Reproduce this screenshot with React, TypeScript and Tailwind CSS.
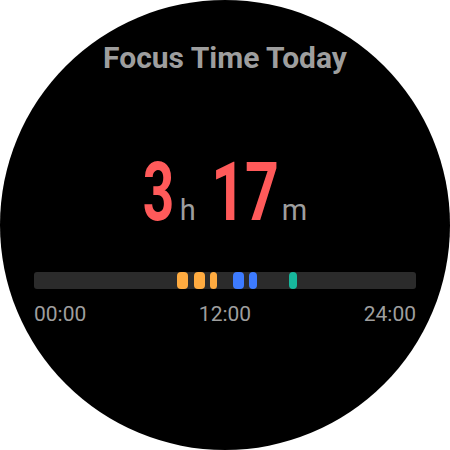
import React from "react";

const segments = [
  { left: 142.7, width: 11.3, color: "#ffab40" },
  { left: 160, width: 10.7, color: "#ffab40" },
  { left: 176, width: 7.3, color: "#ffab40" },
  { left: 198.7, width: 11.3, color: "#3d7bff" },
  { left: 215.3, width: 8, color: "#3d7bff" },
  { left: 254.7, width: 8, color: "#17b79c" },
];

export default function App() {
  return (
    <div className="w-[450px] h-[450px] bg-white" style={{ fontFamily: "Roboto, 'Noto Sans', sans-serif" }}>
      <div className="w-[450px] h-[450px] rounded-full bg-black flex flex-col items-center">
        <div className="mt-[40px] text-[30px] leading-[36px] font-bold text-[#9e9e9e]">Focus Time Today</div>
        <div className="mt-[75px] flex items-baseline leading-none">
          <span className="w-[31px] flex justify-center text-[82px] font-bold text-[#ff5a5a]">
            <span className="inline-block scale-x-[0.67]">3</span>
          </span>
          <span className="ml-[6px] text-[29px] text-[#9e9e9e]">h</span>
          <span className="ml-[16px] w-[66px] flex justify-center text-[82px] font-bold text-[#ff5a5a]">
            <span className="inline-block scale-x-[0.72]">17</span>
          </span>
          <span className="ml-[4px] text-[29px] text-[#9e9e9e]">m</span>
        </div>
        <div className="mt-[39px] relative w-[382px] h-[17px] rounded-[3px] bg-[#2b2b2b]">
          {segments.map((s, i) => (
            <div
              key={i}
              className="absolute top-0 h-[17px] rounded-[4px]"
              style={{ left: s.left, width: s.width, backgroundColor: s.color }}
            />
          ))}
        </div>
        <div className="mt-[15px] w-[382px] flex justify-between text-[21px] leading-[21px] text-[#9e9e9e]">
          <span>00:00</span>
          <span>12:00</span>
          <span>24:00</span>
        </div>
      </div>
    </div>
  );
}
